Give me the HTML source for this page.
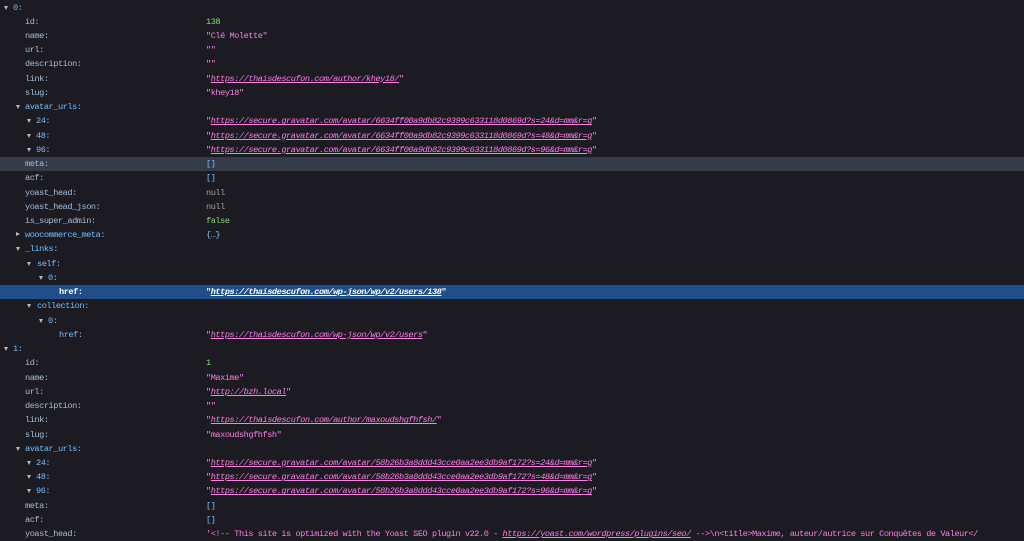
<!DOCTYPE html>
<html><head><meta charset="utf-8"><style>
html,body{margin:0;padding:0;background:#1c1b22;width:1024px;height:541px;overflow:hidden}
body{font-family:"Liberation Mono","DejaVu Sans Mono",monospace;font-size:8.6px;letter-spacing:-0.45px}
#c{position:absolute;top:0.5px;left:0;width:1024px}
.r{position:relative;height:14.24px;line-height:14.24px;white-space:pre}
.k{position:absolute;color:#a3bfd8}
.e{color:#75bfff}
.v{position:absolute;left:206px;color:#ff7de9}
.v a{color:#ff7de9;text-decoration:underline;font-style:italic}
.n{color:#86de74}.nl{color:#a0a0a4}.b{color:#75bfff}
.t{position:absolute;top:5px;width:0;height:0;border-left:2.7px solid transparent;border-right:2.7px solid transparent;border-top:4px solid #b8b8bc}
.hl{background:#353b48}
.sel{background:#204e8a}
.sel .k,.sel .v,.sel .v a{color:#fff;font-weight:bold}
</style></head><body><div id="c">
<div class="r"><span class="t" style="left:4px"></span><span class="k e" style="left:13px">0:</span></div>
<div class="r"><span class="k" style="left:25px">id:</span><span class="v n">138</span></div>
<div class="r"><span class="k" style="left:25px">name:</span><span class="v">"Clé Molette"</span></div>
<div class="r"><span class="k" style="left:25px">url:</span><span class="v">""</span></div>
<div class="r"><span class="k" style="left:25px">description:</span><span class="v">""</span></div>
<div class="r"><span class="k" style="left:25px">link:</span><span class="v">"<a>https://thaisdescufon.com/author/khey18/</a>"</span></div>
<div class="r"><span class="k" style="left:25px">slug:</span><span class="v">"khey18"</span></div>
<div class="r"><span class="t" style="left:16px"></span><span class="k e" style="left:25px">avatar_urls:</span></div>
<div class="r"><span class="t" style="left:27px"></span><span class="k e" style="left:36px">24:</span><span class="v">"<a>https://secure.gravatar.com/avatar/6634ff00a9db82c9399c633118d0869d?s=24&amp;d=mm&amp;r=g</a>"</span></div>
<div class="r"><span class="t" style="left:27px"></span><span class="k e" style="left:36px">48:</span><span class="v">"<a>https://secure.gravatar.com/avatar/6634ff00a9db82c9399c633118d0869d?s=48&amp;d=mm&amp;r=g</a>"</span></div>
<div class="r"><span class="t" style="left:27px"></span><span class="k e" style="left:36px">96:</span><span class="v">"<a>https://secure.gravatar.com/avatar/6634ff00a9db82c9399c633118d0869d?s=96&amp;d=mm&amp;r=g</a>"</span></div>
<div class="r hl"><span class="k" style="left:25px">meta:</span><span class="v b">[]</span></div>
<div class="r"><span class="k" style="left:25px">acf:</span><span class="v b">[]</span></div>
<div class="r"><span class="k" style="left:25px">yoast_head:</span><span class="v nl">null</span></div>
<div class="r"><span class="k" style="left:25px">yoast_head_json:</span><span class="v nl">null</span></div>
<div class="r"><span class="k" style="left:25px">is_super_admin:</span><span class="v n">false</span></div>
<div class="r"><span class="t" style="left:16px;border-top:2.7px solid transparent;border-bottom:2.7px solid transparent;border-left:4px solid #b8b8bc;border-right:0;top:4px"></span><span class="k e" style="left:25px">woocommerce_meta:</span><span class="v b">{…}</span></div>
<div class="r"><span class="t" style="left:16px"></span><span class="k e" style="left:25px">_links:</span></div>
<div class="r"><span class="t" style="left:27px"></span><span class="k e" style="left:37px">self:</span></div>
<div class="r"><span class="t" style="left:39px"></span><span class="k e" style="left:48px">0:</span></div>
<div class="r sel"><span class="k" style="left:59px">href:</span><span class="v">"<a>https://thaisdescufon.com/wp-json/wp/v2/users/138</a>"</span></div>
<div class="r"><span class="t" style="left:27px"></span><span class="k e" style="left:37px">collection:</span></div>
<div class="r"><span class="t" style="left:39px"></span><span class="k e" style="left:48px">0:</span></div>
<div class="r"><span class="k e" style="left:59px">href:</span><span class="v">"<a>https://thaisdescufon.com/wp-json/wp/v2/users</a>"</span></div>
<div class="r"><span class="t" style="left:4px"></span><span class="k e" style="left:13px">1:</span></div>
<div class="r"><span class="k" style="left:25px">id:</span><span class="v n">1</span></div>
<div class="r"><span class="k" style="left:25px">name:</span><span class="v">"Maxime"</span></div>
<div class="r"><span class="k" style="left:25px">url:</span><span class="v">"<a>http://bzh.local</a>"</span></div>
<div class="r"><span class="k" style="left:25px">description:</span><span class="v">""</span></div>
<div class="r"><span class="k" style="left:25px">link:</span><span class="v">"<a>https://thaisdescufon.com/author/maxoudshgfhfsh/</a>"</span></div>
<div class="r"><span class="k" style="left:25px">slug:</span><span class="v">"maxoudshgfhfsh"</span></div>
<div class="r"><span class="t" style="left:16px"></span><span class="k e" style="left:25px">avatar_urls:</span></div>
<div class="r"><span class="t" style="left:27px"></span><span class="k e" style="left:36px">24:</span><span class="v">"<a>https://secure.gravatar.com/avatar/58b26b3a8ddd43cce0aa2ee3db9af172?s=24&amp;d=mm&amp;r=g</a>"</span></div>
<div class="r"><span class="t" style="left:27px"></span><span class="k e" style="left:36px">48:</span><span class="v">"<a>https://secure.gravatar.com/avatar/58b26b3a8ddd43cce0aa2ee3db9af172?s=48&amp;d=mm&amp;r=g</a>"</span></div>
<div class="r"><span class="t" style="left:27px"></span><span class="k e" style="left:36px">96:</span><span class="v">"<a>https://secure.gravatar.com/avatar/58b26b3a8ddd43cce0aa2ee3db9af172?s=96&amp;d=mm&amp;r=g</a>"</span></div>
<div class="r"><span class="k" style="left:25px">meta:</span><span class="v b">[]</span></div>
<div class="r"><span class="k" style="left:25px">acf:</span><span class="v b">[]</span></div>
<div class="r"><span class="k" style="left:25px">yoast_head:</span><span class="v">'&lt;!-- This site is optimized with the Yoast SEO plugin v22.0 - <a>https://yoast.com/wordpress/plugins/seo/</a> --&gt;\n&lt;title&gt;Maxime, auteur/autrice sur Conquêtes de Valeur&lt;/</span></div>
</div></body></html>
